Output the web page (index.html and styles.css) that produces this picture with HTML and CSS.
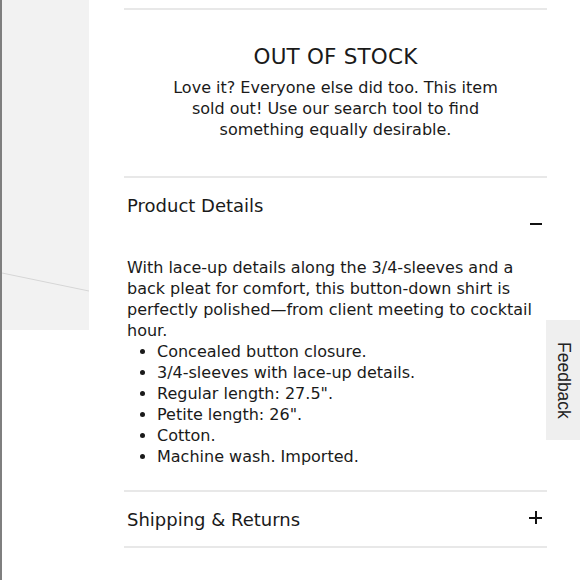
FILE: index.html
```html
<!DOCTYPE html>
<html lang="en">
<head>
<meta charset="utf-8">
<title>Product</title>
<link rel="stylesheet" href="styles.css">
</head>
<body>
<div class="page">
  <div class="media">
    <svg class="media-line" width="87" height="330" viewBox="0 0 87 330"><path d="M0 273 L87 291" stroke="#d6d6d6" stroke-width="1" fill="none"/></svg>
  </div>
  <main class="content">
    <div class="rule"></div>
    <section class="stock">
      <h2 class="stock-title">OUT OF STOCK</h2>
      <p class="stock-text">Love it? Everyone else did too. This item<br>sold out! Use our search tool to find<br>something equally desirable.</p>
    </section>
    <div class="rule"></div>
    <section class="acc">
      <div class="acc-head acc-head-open">
        <h3 class="acc-title">Product Details</h3>
        <span class="icon-minus"></span>
      </div>
      <div class="acc-body">
        <p class="desc">With lace-up details along the 3/4-sleeves and a back pleat for comfort, this button-down shirt is perfectly polished—from client meeting to cocktail hour.</p>
        <ul class="bullets">
          <li>Concealed button closure.</li>
          <li>3/4-sleeves with lace-up details.</li>
          <li>Regular length: 27.5".</li>
          <li>Petite length: 26".</li>
          <li>Cotton.</li>
          <li>Machine wash. Imported.</li>
        </ul>
      </div>
    </section>
    <div class="rule"></div>
    <section class="acc">
      <div class="acc-head">
        <h3 class="acc-title">Shipping &amp; Returns</h3>
        <span class="icon-plus"></span>
      </div>
    </section>
    <div class="rule"></div>
  </main>
  <button class="feedback">Feedback</button>
</div>
</body>
</html>
```
FILE: styles.css
```css
html, body {
  margin: 0;
  padding: 0;
  background: #fff;
}
body {
  font-family: "DejaVu Sans", "Open Sans", sans-serif;
  color: #1a1a1a;
}
.page {
  position: relative;
  display: flex;
  align-items: flex-start;
  min-height: 580px;
  border-left: 2px solid #7f7f7f;
  box-sizing: border-box;
}
.media {
  width: 87px;
  height: 330px;
  background: #f2f2f2;
  flex: none;
}
.media-line {
  display: block;
}
.content {
  margin-left: 35px;
  width: 423px;
  padding-top: 8px;
}
.rule {
  height: 2px;
  background: #e8e8e8;
}
.stock {
  text-align: center;
  padding: 34px 0 36px;
}
.stock-title {
  margin: 0;
  font-size: 21.5px;
  line-height: 26px;
  font-weight: 400;
  letter-spacing: 0.2px;
}
.stock-text {
  margin: 7px 0 0;
  font-size: 16px;
  line-height: 21px;
}
.acc-head {
  display: flex;
  justify-content: space-between;
  align-items: flex-start;
  padding: 17px 5px 15px 3px;
}
.acc-title {
  margin: 0;
  font-size: 18px;
  line-height: 22px;
  font-weight: 400;
}
.icon-minus {
  width: 12px;
  height: 2px;
  background: #111;
  margin-top: 28px;
}
.icon-plus {
  position: relative;
  width: 13px;
  height: 13px;
  margin-top: 2px;
}
.icon-plus::before,
.icon-plus::after {
  content: "";
  position: absolute;
  background: #111;
}
.icon-plus::before {
  left: 0;
  right: 0;
  top: 5.5px;
  height: 2px;
}
.icon-plus::after {
  top: 0;
  bottom: 0;
  left: 5.5px;
  width: 2px;
}
.acc-head-open {
  padding-bottom: 0;
}
.acc-body {
  padding: 32px 0 23px 3px;
}
.desc {
  margin: 0;
  font-size: 16px;
  line-height: 21px;
}
.bullets {
  list-style: none;
  margin: 0;
  padding: 0;
  font-size: 16px;
  line-height: 21px;
}
.bullets li {
  display: flex;
  align-items: center;
}
.bullets li::before {
  content: "";
  width: 5px;
  height: 5px;
  border-radius: 50%;
  background: #1a1a1a;
  margin: 0 12px 0 13px;
  flex: none;
}
.feedback {
  position: absolute;
  right: 0;
  top: 320px;
  width: 34px;
  height: 120px;
  border: 0;
  padding: 0;
  background: #efefef;
  color: #222;
  font-family: "Liberation Sans", Arial, sans-serif;
  font-size: 17.5px;
  writing-mode: vertical-rl;
  text-align: center;
}
```
